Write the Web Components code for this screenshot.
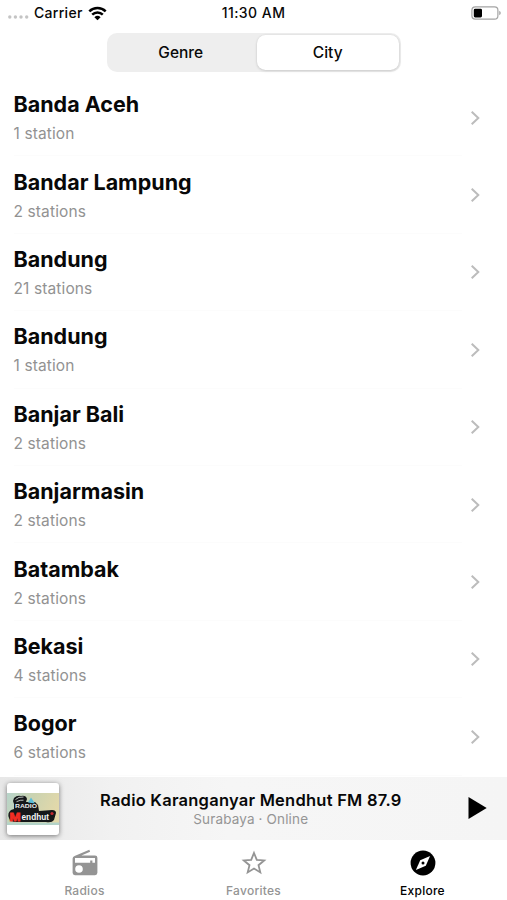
<!DOCTYPE html>
<html lang="en">
<head>
<meta charset="utf-8">
<meta name="viewport" content="width=device-width, initial-scale=1">
<title>Explore</title>
<style>
  html, body { margin: 0; height: 100%; }
  body {
    background: #fff;
    color: #080808;
    font-family: Inter, "Liberation Sans", sans-serif;
    overflow: hidden;
  }
</style>
</head>
<body>
<radio-app></radio-app>

<script>
const define = (name, html, setup) => {
  const template = document.createElement('template');
  template.innerHTML = html;
  customElements.define(name, class extends HTMLElement {
    constructor() {
      super();
      this.attachShadow({ mode: 'open' }).appendChild(template.content.cloneNode(true));
    }

    connectedCallback() {
      if (setup) setup(this, this.shadowRoot);
    }
  });
};

// ---------- status bar ----------
define('status-bar', `
  <style>
    :host {
      display: grid;
      grid-template-columns: 1fr auto 1fr;
      align-items: center;
      height: 26px;
      padding: 0 8px;
      box-sizing: border-box;
      font-size: 14px;
      font-weight: 500;
      line-height: 26px;
    }
    .left { display: flex; align-items: center; }
    .dots { margin: 8px 5px 0 0; }
    .wifi { margin-left: 5px; }
    .carrier { letter-spacing: 0.3px; }
    .time { letter-spacing: 0.45px; }
    .battery { justify-self: end; margin-right: -2px; }
    svg { display: block; }
  </style>
  <div class="left">
    <svg class="dots" width="21" height="4" viewBox="0 0 21 4" fill="#c4c4c4">
      <circle cx="1.8" cy="2" r="1.7"/><circle cx="7.4" cy="2" r="1.7"/>
      <circle cx="13" cy="2" r="1.7"/><circle cx="18.7" cy="2" r="1.7"/>
    </svg>
    <span class="carrier">Carrier</span>
    <svg class="wifi" width="19" height="15" viewBox="0 0 19 15">
      <path d="M1.3 5.3a11.7 11.7 0 0 1 16.4 0M4.2 8.6a7.6 7.6 0 0 1 10.6 0" fill="none" stroke="#000" stroke-width="2.5"/>
      <path d="M9.5 14.3 6.4 11.2a4.5 4.5 0 0 1 6.2 0z"/>
    </svg>
  </div>
  <span class="time">11:30 AM</span>
  <svg class="battery" width="30" height="14" viewBox="0 0 30 14">
    <rect x=".9" y=".8" width="26" height="12.4" rx="3.4" fill="#fff" stroke="#a4a4a4" stroke-width="1.2"/>
    <rect x="2.8" y="2.7" width="8.2" height="8.8" rx="1.4"/>
    <path d="M28.3 4.8q1.4.7 1.4 2.2t-1.4 2.2z" fill="#999"/>
  </svg>
`);

// ---------- segmented control ----------
define('segmented-control', `
  <style>
    :host {
      display: flex;
      width: 294px;
      height: 39.5px;
      padding: 2px;
      box-sizing: border-box;
      border-radius: 10px;
      background: #eee;
    }
    ::slotted(*) {
      flex: 1;
      box-sizing: border-box;
      padding-right: 4px;
      text-align: center;
      font-size: 15.5px;
      font-weight: 500;
      line-height: 35px;
      letter-spacing: 0;
      border-radius: 8.5px;
    }
    ::slotted([selected]) {
      flex: 0 0 141.5px;
      padding: 0;
      background: #fff;
      box-shadow: 0 1px 3px rgba(0, 0, 0, .13), 0 0 2px rgba(0, 0, 0, .08);
    }
  </style>
  <slot></slot>
`);

// ---------- list ----------
define('city-row', `
  <style>
    :host {
      display: flex;
      align-items: center;
      height: 77.4px;
      padding: 0 26px 0 13.5px;
      box-sizing: border-box;
      background: linear-gradient(#fcfcfc, #fcfcfc) 14px 100% / 448px 1px no-repeat;
    }
    .text { flex: 1; min-width: 0; padding-top: 2px; }
    .name {
      font-size: 21.5px;
      font-weight: 700;
      line-height: 28px;
      letter-spacing: 0;
    }
    .count {
      margin-top: 3px;
      font-size: 15.5px;
      line-height: 26px;
      letter-spacing: 0.12px;
      color: #929292;
    }
    svg { display: block; }
  </style>
  <div class="text">
    <div class="name"><slot></slot></div>
    <div class="count"></div>
  </div>
  <svg width="11" height="16" viewBox="0 0 11 16" fill="none" stroke="#bcbcbc" stroke-width="2">
    <path d="m1.7 1.7 6.6 6.3-6.6 6.3"/>
  </svg>
`, (host, root) => {
  const n = Number(host.getAttribute('stations'));
  root.querySelector('.count').textContent = n === 1 ? '1 station' : `${n} stations`;
});

// ---------- mini player ----------
define('station-art', `
  <style>
    :host {
      display: flex;
      align-items: center;
      width: 52px;
      height: 52px;
      border-radius: 3px;
      background: #fff;
      box-shadow: 0 1px 5px rgba(0, 0, 0, .5);
      overflow: hidden;
    }
    svg { display: block; }
    text { font-family: "Liberation Sans", sans-serif; font-weight: 700; }
  </style>
  <svg width="52" height="32" viewBox="0 0 52 32">
    <defs>
      <linearGradient id="sky" x1="0" y1="0" x2="1" y2=".3">
        <stop offset="0" stop-color="#b7d4ca"/>
        <stop offset=".5" stop-color="#cbd3b0"/>
        <stop offset="1" stop-color="#e2d8aa"/>
      </linearGradient>
    </defs>
    <rect width="52" height="32" fill="url(#sky)"/>
    <path d="M0 29.5h52V32H0z" fill="#b3d3c8"/>
    <path d="M7 5q3-3 7-2 5-1 6 3l-1 3 9 0 3 3 1 6 13-1q4 0 4 3l-2 7q-2 3-8 2l-30 0q-6 0-7-4-2-5 2-8l3-1 0-5-1-3z" fill="#151719"/>
    <path d="M8.5 6.5q3-3 8-2.5M9.5 8.7q4-2 7-1.5" fill="none" stroke="#ccd1ce" stroke-width=".9"/>
    <path d="m21 9.5 3-5 4 6z" fill="#5bbcd8"/>
    <text x="8" y="15.3" font-size="6" fill="#e8eceb" textLength="22" lengthAdjust="spacingAndGlyphs">RADIO</text>
    <text x="2.5" y="28" font-size="11" fill="#f52d23" stroke="#f52d23" stroke-width=".8" textLength="11" lengthAdjust="spacingAndGlyphs">M</text>
    <text x="14.5" y="27" font-size="9.5" fill="#f4f4f4" textLength="27.5" lengthAdjust="spacingAndGlyphs">endhut</text>
    <circle cx="45" cy="20.5" r="1.6" fill="#c22a31"/>
  </svg>
`);

define('mini-player', `
  <style>
    :host {
      display: flex;
      align-items: center;
      height: 63px;
      padding: 0 20.5px 0 7px;
      box-sizing: border-box;
      background: linear-gradient(90deg, #e7e7e7, #f1f1f1 22%, #f6f6f6 45%, #f5f5f5);
    }
    .text { flex: 1; text-align: center; padding-right: 33px; white-space: nowrap; margin-left: 8px; }
    .title { font-size: 16.5px; font-weight: 600; line-height: 22px; letter-spacing: 0.24px; }
    .subtitle { font-size: 13.5px; line-height: 17px; letter-spacing: 0.15px; color: #959595; }
    svg { display: block; margin-top: -1px; }
  </style>
  <station-art></station-art>
  <div class="text">
    <div class="title"><slot name="title"></slot></div>
    <div class="subtitle"><slot name="subtitle"></slot></div>
  </div>
  <svg width="19" height="22" viewBox="0 0 19 22"><path d="M.5 0v22L18.7 11z"/></svg>
`);

// ---------- tab bar ----------
define('tab-item', `
  <style>
    :host {
      flex: 1;
      display: flex;
      flex-direction: column;
      align-items: center;
      color: #949494;
      font-size: 12px;
      font-weight: 500;
      line-height: 16px;
      letter-spacing: 0.25px;
    }
    :host([selected]) { color: #000; }
    .icon { height: 32px; margin-bottom: 3px; }
    ::slotted(svg) { display: block; }
  </style>
  <div class="icon"><slot name="icon"></slot></div>
  <slot></slot>
`);

define('tab-bar', `
  <style>
    :host { display: flex; height: 60px; padding-top: 8px; box-sizing: border-box; background: #fff; }
  </style>
  <slot></slot>
`);

// ---------- app ----------
define('radio-app', `
  <style>
    :host { display: flex; flex-direction: column; height: 900px; overflow: hidden; }
    segmented-control { align-self: center; margin-top: 6.5px; flex: none; }
    .list { flex: 1; min-height: 0; overflow: hidden; padding-top: 7px; }
    status-bar, mini-player, tab-bar { flex: none; }
  </style>
  <status-bar></status-bar>
  <segmented-control>
    <span>Genre</span>
    <span selected>City</span>
  </segmented-control>
  <div class="list">
    <city-row stations="1">Banda Aceh</city-row>
    <city-row stations="2">Bandar Lampung</city-row>
    <city-row stations="21">Bandung</city-row>
    <city-row stations="1">Bandung</city-row>
    <city-row stations="2">Banjar Bali</city-row>
    <city-row stations="2">Banjarmasin</city-row>
    <city-row stations="2">Batambak</city-row>
    <city-row stations="4">Bekasi</city-row>
    <city-row stations="6">Bogor</city-row>
  </div>
  <mini-player>
    <span slot="title">Radio Karanganyar Mendhut FM 87.9</span>
    <span slot="subtitle">Surabaya · Online</span>
  </mini-player>
  <tab-bar>
    <tab-item>
      <svg slot="icon" width="26" height="28" viewBox="0 0 26 28" fill="#949494">
        <path fill-rule="evenodd" d="M2.6 7.9 17.3 1.8l.8 1.9L9.4 7.4H23a2.4 2.4 0 0 1 2.4 2.4v15a2.4 2.4 0 0 1-2.4 2.4H3a2.4 2.4 0 0 1-2.4-2.4V10.4q0-1.7 2-2.5zM3 9.9v4.9h15.2v-2.4h2.2v2.4H23V9.9zM7 17.2a3.8 3.8 0 1 0 0 7.6A3.8 3.8 0 0 0 7 17.2z"/>
      </svg>
      Radios
    </tab-item>
    <tab-item>
      <svg slot="icon" width="26" height="28" viewBox="0 0 26 28" fill="none" stroke="#949494" stroke-width="1.8">
        <path d="m13 5 2.8 6.9 7.4.5-5.7 4.8 1.8 7.2-6.3-3.9-6.3 3.9 1.8-7.2-5.7-4.8 7.4-.5z"/>
      </svg>
      Favorites
    </tab-item>
    <tab-item selected>
      <svg slot="icon" width="26" height="28" viewBox="0 0 26 28">
        <circle cx="13" cy="15" r="12.4"/>
        <path d="M20.1 8 15.8 17.8 5.9 22l4.3-9.8z" fill="#fff"/>
        <circle cx="13" cy="15" r="1.5"/>
      </svg>
      Explore
    </tab-item>
  </tab-bar>
`);
</script>
</body>
</html>
